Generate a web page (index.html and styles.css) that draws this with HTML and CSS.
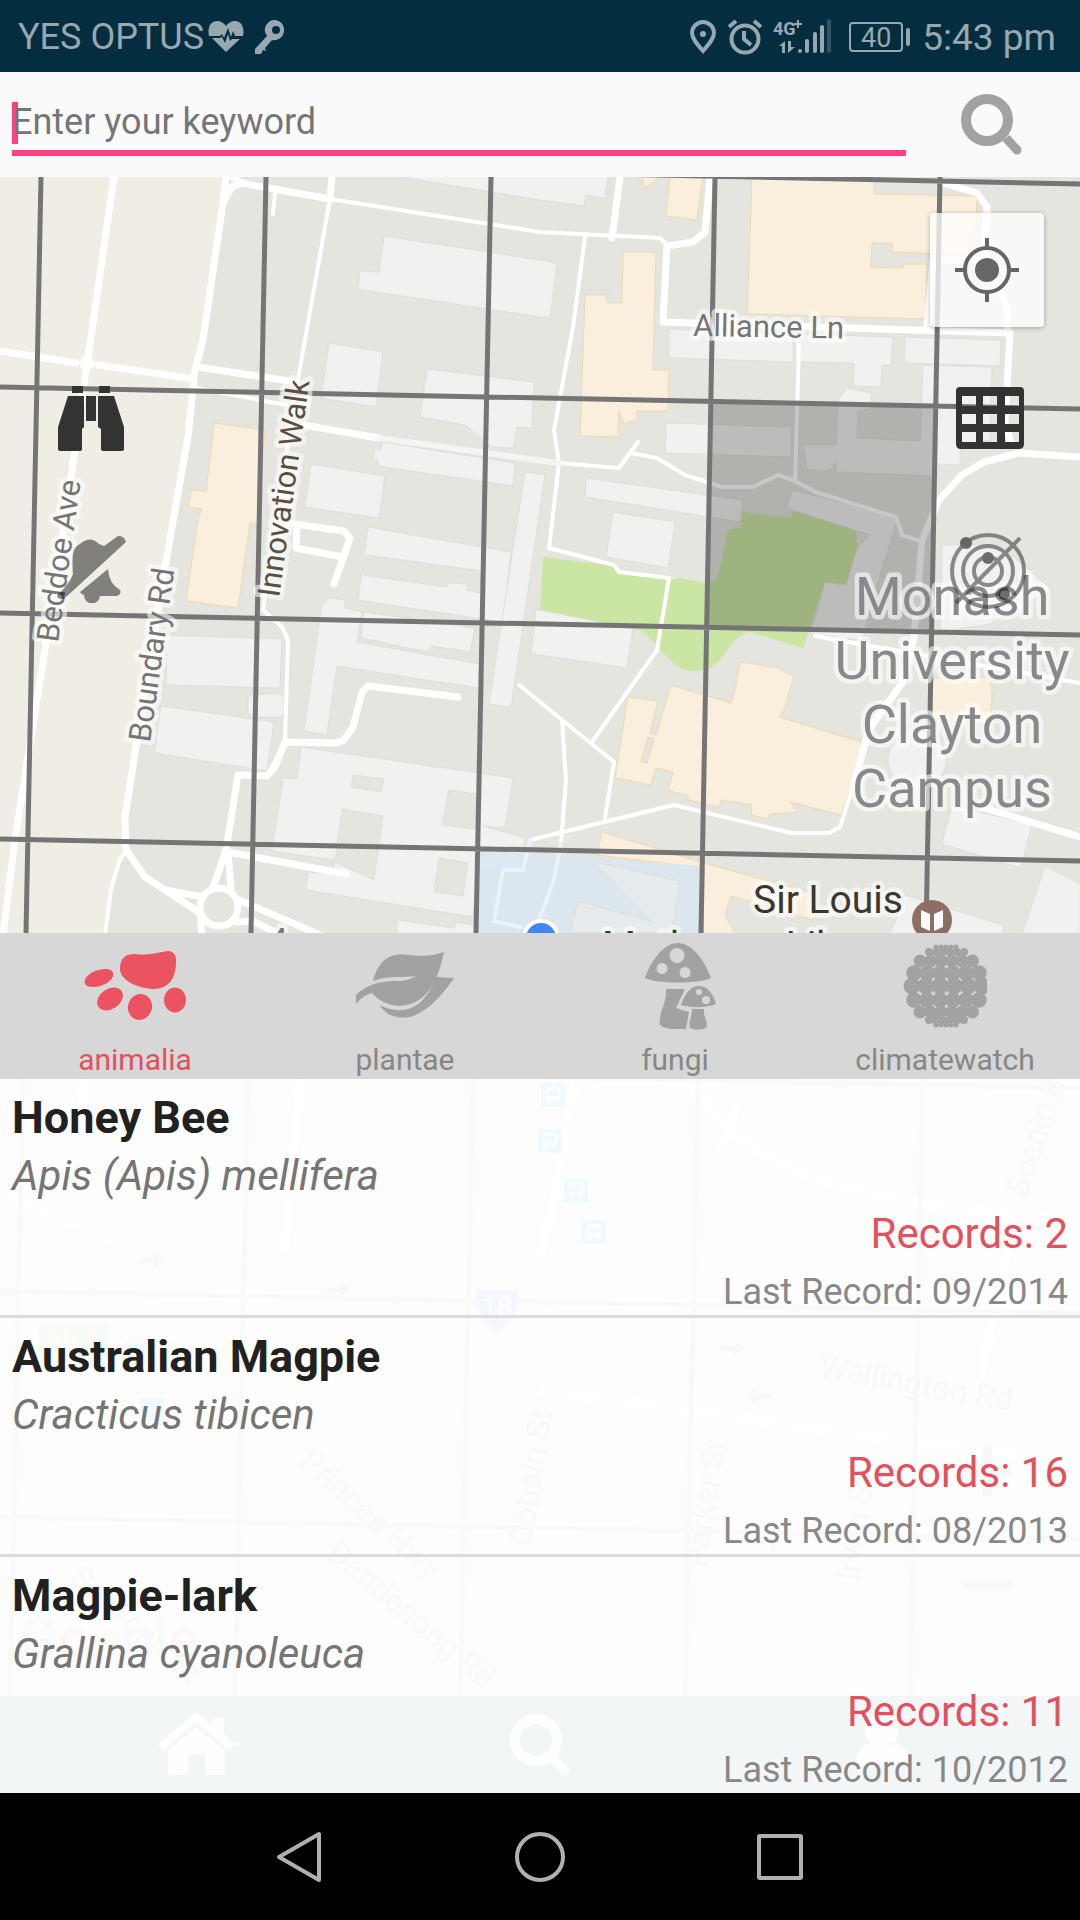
FILE: index.html
```html
<!DOCTYPE html>
<html lang="en">
<head>
<meta charset="utf-8">
<meta name="viewport" content="width=device-width, initial-scale=1">
<title>Nearby species</title>
<link rel="stylesheet" href="styles.css">
</head>
<body>
<div class="status">
  <span class="carrier">YES OPTUS</span>
  <svg class="status-heart" width="36" height="34" viewBox="0 0 36 34"><path fill="#98a8b0" d="M1 16C-1 7 3 1 9 1c4 0 7 2 9 5 2-3 5-5 9-5 6 0 10 6 8 15h-8l-2-5-2 6-3-9-4 10-2-4-2 2zM4 18h8l2-1 3 6 3-9 2 7 2-2h8L18 32z"/></svg>
  <svg width="33" height="36" viewBox="0 0 33 36"><path fill="#98a8b0" fill-rule="evenodd" d="M22 1a10 10 0 1 1-4 20L11 29l1 3-3-1-2 4H1v-5L13 17A10 10 0 0 1 22 1zm0 6a4 4 0 1 0 0 8 4 4 0 0 0 0-8z"/></svg>
  <div class="status-right">
    <svg width="28" height="36" viewBox="0 0 28 36"><path fill="none" stroke="#98a8b0" stroke-width="4" d="M14 32C7 24 3 19 3 14a11 11 0 0 1 22 0c0 5-4 10-11 18z"/><circle cx="14" cy="15" r="3" fill="#98a8b0"/></svg>
    <svg width="34" height="36" viewBox="0 0 34 36"><g fill="none" stroke="#98a8b0" stroke-width="4"><circle cx="17" cy="20" r="13.500"/><path d="M16 12v8l7 6M1 8l7-6M33 8l-7-6"/></g></svg>
    <svg width="60" height="36" viewBox="0 0 60 36"><text class="net" x="0" y="16">4G</text><path stroke="#98a8b0" stroke-width="2" fill="none" d="M21 5h8M25 1v8"/><path fill="#98a8b0" d="M12 22v12H9v-7H6zM15 22v12l7-6h-4v-6z"/><g stroke="#98a8b0" stroke-width="4" stroke-linecap="round"><path d="M27 32v0M34 32V22M42 32V15M49 32V8"/><path opacity=".3" d="M56 32V2"/></g></svg>
    <span class="battery">40</span>
    <span class="clock">5:43 pm</span>
  </div>
</div>

<form class="search">
  <input class="search-input" type="text" aria-label="Keyword" placeholder="Enter your keyword">
  <button class="search-button" type="button" aria-label="Search"><svg width="68" height="66" viewBox="0 0 68 66"><circle cx="28" cy="28" r="21" fill="none" stroke="#a3a2a0" stroke-width="10"/><path d="M47 46l11 12" stroke="#a3a2a0" stroke-width="9"/><circle cx="58" cy="58" r="4.500" fill="#a3a2a0"/></svg></button>
</form>

<section class="map" aria-label="Map">
  <svg class="map-canvas" viewBox="0 177 1080 756">
    <rect y="177" width="1080" height="756" fill="#e3e5de"/>
    <path fill="#f0ede4" d="M0 177H226L195 380 165 570 136 745 125 817 126 850 111 890 105 933H0z"/>
    <path fill="#cbe6a3" d="M543 557L614 566 619 572 668 580 680 578 705 583 716 580 722 560 727 530 740 528 743 512 790 518 793 511 856 530 858 548 846 585 825 582 803 648 750 632Q742 634 735 640C728 648 722 660 712 667 700 672 690 672 682 669 668 662 655 640 640 630L540 612z"/>
    <g class="gray">
      <path d="M384 236L540 260 557 263 550 318 540 317 358 289 360 271 379 272z"/>
      <path d="M395 176L540 200 584 206 586 195 605 198 608 176z"/>
      <path d="M329 343L383 352 376 407 321 398z"/>
      <path d="M427 369L534 382 532 428 517 427 513 448 492 447 465 425 420 417z"/>
      <path d="M382 442L515 463 513 486 378 466 378 460 373 459 375 449 381 450z"/>
      <path d="M311 464L385 476 379 518 305 507z"/>
      <path d="M368 527L511 552 503 622 475 618 358 600z"/>
      <path d="M525 472L545 475 511 707 489 704z"/>
      <path d="M322 604L330 598 345 600 345 608 362 612 357 642 480 664 478 688 337 666 327 735 304 731z"/>
      <path d="M364 612L475 628 470 652 431 646 429 652 413 649 361 638z"/>
      <path d="M167 635L282 639 280 688 166 685z"/>
      <path d="M161 706L274 722 267 771 154 753z"/>
      <path d="M252 694H281L284 698V713L281 717H252L248 713V698z"/>
      <path d="M301 747L513 778 505 828 483 826 525 838 520 870 478 868 473 917 306 890 308 872 334 874 334 860 272 851 283 778 297 779z"/>
      <path d="M397 920L454 928 456 922 480 926V940H397z"/>
      <path d="M669 329L793 333V362L669 358z"/>
      <path d="M795 334L893 337 891 365 882 365 881 387 853 386 854 363 795 362z"/>
      <path d="M905 337L1001 340 1000 366 904 363z"/>
      <path d="M923 365L992 367 990 440 960 445V465L938 464 938 476 836 472 836 462 830 471 807 470 803 445 836 445 838 400 847 388 871 393 871 409 858 411 857 438 920 441z"/>
      <path d="M666 423L791 427V457L665 453z"/>
      <path d="M586 478L743 500 740 522 585 497z"/>
      <path d="M613 512L675 522 668 568 606 557z"/>
      <path d="M793 490L898 517 880 575 862 640 810 634 825 582 846 585 857 548 870 535 786 508z"/>
      <path d="M540 610L633 629 627 668 540 655 531 653 536 610z"/>
      <path d="M952 805L1032 825 1021 868 942 844z"/>
      <path d="M1045 866L1080 884V940H1020z"/>
      <circle cx="917" cy="760" r="29"/>
      <path d="M905 895L1003 925V940H888z"/>
      <path d="M942 545L1000 545 1052 590 990 624 940 632z"/>
    </g>
    <g class="court">
      <path d="M366 555L482 571 480 593 467 590 467 584 447 583 447 587 363 575z"/>
      <path d="M342 809L383 816 374 880 335 862z"/>
      <path d="M353 775L384 779 381 792 351 787z"/>
      <path d="M449 790L476 794V829L442 825z"/>
      <path d="M439 858L468 863 463 896 434 892z"/>
    </g>
    <g class="tan">
      <path d="M214 423L265 430 258 523 250 523 238 608 186 601 198 519 202 509 188 507 191 490 206 491z"/>
      <path d="M752 176L874 176V194L977 196 975 255 892 252V243L872 243 871 267 903 268 904 264 927 264 925 319 747 314z"/>
      <path d="M670 176H703L697 220 666 216z"/><path d="M641 176H662L645 188z"/>
      <path d="M623 252L656 252 653 370 669 370 668 411 636 411 638 419 624 424 619 411 618 437 580 436 585 296 Q600 290 607 298L608 303 622 303z"/>
      <path fill-rule="evenodd" d="M671 685L731 703 735 690 738 672 741 662 760 665 778 668 794 677 787 700 784 710 779 717 865 743 860 765 841 815 790 802 798 812 770 814 768 819 751 815 752 805 721 800 719 807 688 800 688 795 668 791 673 772 656 768 651 785 615 778 628 697 658 701 650 733 656 735zM648 737L654 739 647 763 641 762z"/>
      <path d="M602 832L704 863 818 895 813 920 731 896 725 915 738 940H703L704 868 597 855z"/>
      <path d="M929 678L990 677 992 695 990 725 929 718z"/>
    </g>
    <path class="court" d="M586 290h24v5h-24z"/>
    <path fill="#dae6f2" fill-opacity=".85" d="M478 850L704 866 702 933H476z"/>
    <path class="court-blue" d="M595 862L680 881 672 933H570L578 901 654 922"/>
    <g class="roads">
      <path stroke-width="7" d="M114 177L88 358 84 385 62 540 46 643 15 839 3 935M226 177L223 203 203 340 195 370 188 437 165 567 136 747 125 817 126 850 145 877 165 890 200 913 202 935M165 890L203 897M0 351L76 363M98 365L168 375 193 379M198 367L296 382M303 425L379 438M223 203L232 187 241 183 330 199M241 183L231 176"/>
      <circle cx="219" cy="907" r="19" stroke-width="7"/><circle cx="87" cy="363" r="5" stroke-width="5"/>
      <path stroke-width="7" d="M213 888L226 850 238 775 267 776 275 767 285 742 337 743 344 740 353 727 362 692 368 686 458 697M231 888L228 852 346 874M239 900L325 937M236 922L252 921 285 937M332 177L330 199M287 523L344 531 350 538 334 584M297 526L296 548 343 557"/>
      <path stroke-width="4" d="M330 199L297 385 265 593 263 610 282 627 288 640 285 742 267 776M330 199L540 232 660 238 667 245M275 194L273 214M126 850L119 862 111 890 105 935M196 388L286 405M559 463L619 468 638 442M631 453L657 458 685 475 722 487 753 487 778 475 795 481 815 492 896 517 902 535 920 541M799 345L795 481M585 237L573 327 554 430 559 463 549 548 614 565 619 572 669 578 657 650 592 742M519 685L614 762 605 818M562 720L566 780 561 843M855 780L840 827 829 833 791 833 674 805 530 840M815 636L1080 683"/>
      <path stroke-width="7" d="M667 245L663 322 1010 333 1005 423 1012 445M667 246L693 242 705 232 710 177M620 177L612 238M943 183L977 193 987 207 984 260 1007 307 1008 333M984 260H933L927 328M1080 457L1019 453 984 462 962 475 939 500 922 540 914 637 902 683 869 730 855 780M981 807L1080 837"/>
      <path stroke="#f4f4f4" stroke-width="6" d="M379 438L559 463"/>
      <path stroke="#eaf2fb" stroke-width="4" d="M561 843L554 880 540 917M530 840L523 870 503 870 494 921 520 927"/>
    </g>
    <path fill-opacity=".22" d="M711 402L936 406 932 632 707 628z"/>
    <path class="grid" d="M41 177L26 933M266 177L251 933M491 177L476 933M715 177L701 933M940 177L926 933M0 161L1080 184M0 387L1080 409M0 613L1080 635M0 839L1080 861"/>
    <g class="place">
      <text x="693" y="336" transform="rotate(1 693 336)">Alliance Ln</text>
      <text x="58" y="643" transform="rotate(-82 58 643)">Beddoe Ave</text>
      <text x="150" y="743" transform="rotate(-82 150 743)">Boundary Rd</text>
      <text class="walk" x="279" y="598" transform="rotate(-82 279 598)">Innovation Walk</text>
      <text x="270" y="950">4</text>
    </g>
    <g class="campus"><text x="952" y="615">Monash</text><text x="952" y="679">University</text><text x="952" y="743">Clayton</text><text x="952" y="807">Campus</text></g>
    <g class="poi"><text x="753" y="913">Sir Louis</text><text x="602" y="959">Matheson Library</text></g>
    <circle cx="541" cy="938" r="17" fill="#4285f4" stroke="#fff" stroke-width="4"/>
    <circle cx="932" cy="920" r="20" fill="#8d6e63"/><path fill="#fff" d="M921 910l9 4v17l-9-4zM943 910l-9 4v17l9-4z"/>
  </svg>
  <div class="tools tools-left">
    <button type="button" class="tool" aria-label="Explore"><svg width="68" height="68" viewBox="0 0 68 68"><path fill="#333" d="M15 1h11v7H15zM42 1h11v7H42zM11 11h16v31l-2 2v20q0 2-2 2H3q-2 0-2-2V42zM29 11h10v25H29zM41 11h16l10 31v22q0 2-2 2H46q-2 0-2-2V44l-3-2z"/></svg></button>
    <button type="button" class="tool" aria-label="Turn alerts on"><svg width="74" height="68" viewBox="0 0 74 68"><g fill="#000" fill-opacity=".46"><path d="M19 39C18 20 18 13 26 9q10-9 19 0l5 2L64 1q6-1 8 6L11 63q-7 3-8-3 12-10 16-21z"/><path d="M54 34q1 15 12 21 2 4-3 6H46a8 8 0 0 1-16-1q-3-1-4-3z"/></g></svg></button>
  </div>
  <div class="tools tools-right">
    <button type="button" class="tool locate" aria-label="My location"><svg width="68" height="68" viewBox="0 0 68 68"><g fill="none" stroke="#666" stroke-width="4"><circle cx="34" cy="34" r="22"/><path d="M34 2v10M34 56v10M2 34h10M56 34h10"/></g><circle cx="34" cy="34" r="12" fill="#666"/></svg></button>
    <button type="button" class="tool" aria-label="Toggle grid"><svg width="74" height="64" viewBox="-5 0 74 64"><path fill="#333" fill-rule="evenodd" d="M5 1h60q4 0 4 4v53q0 5-5 5H6q-5 0-5-5V5q0-4 4-4zM7 10v10h14V10zm21 0v10h14V10zm22 0v10h14V10zM7 28v10h14V28zm21 0v10h14V28zm22 0v10h14V28zM7 46v10h14V46zm21 0v10h14V46zm22 0v10h14V46z"/></svg></button>
    <button type="button" class="tool radar" aria-label="Turn radar on"><svg width="78" height="80" viewBox="0 0 78 80"><g opacity=".55"><g fill="none" stroke="#333" stroke-width="4"><circle cx="40" cy="40" r="36"/><circle cx="40" cy="40" r="25"/><circle cx="40" cy="40" r="14"/><path d="M8 72L72 7"/></g><circle cx="18" cy="12" r="6"/><circle cx="40" cy="27" r="6"/><circle cx="56" cy="63" r="6"/></g></svg></button>
  </div>
</section>

<nav class="kinds" aria-label="Groups">
  <button type="button" class="kind kind-on"><svg class="kind-icon" width="104" height="90" viewBox="0 0 104 90"><g fill="#ea535f"><path d="M37 26C37 14 44 11 51 11c15 2 25-2 34-3 6 0 9 5 8 13-1 16-8 24-21 25-17 0-35-9-35-20z"/><ellipse cx="16" cy="35" rx="15" ry="8" transform="rotate(-20 16 35)"/><ellipse cx="27" cy="56" rx="14" ry="10" transform="rotate(-34 27 56)"/><ellipse cx="57" cy="64" rx="12" ry="13" transform="rotate(20 57 64)"/><ellipse cx="92" cy="57" rx="11" ry="12.500"/></g></svg><span>animalia</span></button>
  <button type="button" class="kind"><svg class="kind-icon" width="100" height="90" viewBox="0 0 100 90"><g fill="#a3a2a0"><path d="M18 38C24 15 37 10 53 12c18 2 26 0 36-3C84 31 76 61 45 63 32 62 24 58 17 50 10 52 6 55 1 61v-9C15 38 34 38 43 38q10 0 18-5-7 1-18 1-15 0-25 4z"/><path d="M24 62c19 9 43 10 57-28l18 1C82 60 68 70 55 74c-13 2-23-1-31-12z"/></g></svg><span>plantae</span></button>
  <button type="button" class="kind"><svg class="kind-icon" width="82" height="90" viewBox="-10 0 82 90"><path fill="#a3a2a0" fill-rule="evenodd" d="M1 35C9 13 22 0 34 0s25 13 33 35c-11 6-55 6-66 0zM33 5a7 7 0 1 0 0 15 7 7 0 0 0 0-15zM18 20a5 5 0 1 0 0 11 5 5 0 0 0 0-11zM41 24a5 5 0 1 0 0 11 5 5 0 0 0 0-11zM22 46h19L32 65l13 4-3 17c-10 0-20 1-26-4-2-12 7-22 6-36zM37 62c4-12 10-19 18-19s14 7 17 18c-10 4-25 4-35 1zM55 46a3 3 0 1 0 0 6 3 3 0 0 0 0-6zM62 53a4 4 0 1 0 0 8 4 4 0 0 0 0-8zM48 66h12c-1 9 5 13 2 19-4 2-12 2-16 0-2-6 2-10 2-19z"/></svg><span>fungi</span></button>
  <button type="button" class="kind"><svg class="kind-icon" width="84" height="90" viewBox="0 0 84 90"><g fill="none" stroke="#a3a2a0" stroke-linecap="round"><path stroke-width="5" stroke-dasharray="0 5" d="M33 4h21M33 82h21"/><path stroke-width="8" stroke-dasharray="0 7" d="M26 9h36M26 77h36"/><path stroke-width="13" stroke-dasharray="0 10.500" d="M17 18h53M17 69h53"/><path stroke-width="15.500" stroke-dasharray="0 13" d="M11 30h66M11 57h66"/><path stroke-width="17" stroke-dasharray="0 14" d="M9 43h71"/></g></svg><span>climatewatch</span></button>
</nav>

<main class="results">
  <svg class="backdrop" viewBox="0 1079 1080 715" aria-hidden="true">
    <rect y="1079" width="1080" height="715" fill="#fdfdfd"/>
    <g fill="none" stroke="#fff" stroke-width="9"><path d="M692 1082C740 1155 790 1170 860 1190S1000 1210 1080 1225M575 1080L560 1170 540 1260M740 1100L720 1150M0 1190L60 1220 240 1310M85 1080L80 1110M300 1080L285 1250M540 1390L900 1440 1080 1460M1010 1240L980 1380"/></g>
    <path fill="#fefdfb" d="M0 1195L100 1240 540 1308 1080 1390V1460L540 1380 300 1350 180 1400 610 1696H500L0 1330z"/>
    <path class="backdrop-grid" d="M23 1079L10 1696M248 1079L235 1696M473 1079L460 1696M698 1079L685 1696M923 1079L910 1696M540 1077L1080 1088M0 1291L1080 1313M0 1517L1080 1539"/>
    <g class="backdrop-text">
      <text x="1026" y="1198" transform="rotate(-71 1026 1198)">Scenic Blvd</text>
      <text class="warm" x="818" y="1377" transform="rotate(10 818 1377)">Wellington Rd</text>
      <text x="298" y="1464" transform="rotate(42 298 1464)">Princes Hwy</text>
      <text class="warm" x="325" y="1556" transform="rotate(40 325 1556)">Dandenong Rd</text>
      <text x="531" y="1547" transform="rotate(-81 531 1547)">Cobain St</text>
      <text x="706" y="1569" transform="rotate(-81 706 1569)">Parker St</text>
      <text x="858" y="1582" transform="rotate(-81 858 1582)">Irwin St</text>
      <text x="68" y="1580" transform="rotate(41 68 1580)">Souvenir St</text>
    </g>
    <g fill="#effaff"><path id="bus" fill-rule="evenodd" d="M541 1083h24v24h-24zm5 5v11l2 3h2v-2h6v2h2l2-3v-11q-7-4-14 0zm2 2h10v6h-10z"/><use href="#bus" x="-3" y="46"/><use href="#bus" x="23" y="96"/><use href="#bus" x="41" y="137"/><rect x="123" y="1343" width="22" height="22"/><rect x="140" y="1398" width="24" height="24"/></g>
    <path fill="#f4f8fe" d="M476 1290h42q4 28-21 42-25-14-21-42z"/><text class="shield" x="497" y="1317">18</text>
    <rect x="38" y="1324" width="70" height="36" rx="4" fill="#f8fcf6"/><text class="alt" x="73" y="1351">Alt 1</text>
    <g fill="#f8f8f8"><path d="M982 1446h10v50h-10zM962 1466h50v10h-50zM962 1580h50v10h-50zM140 1258h14v-5l12 7-12 7v-4h-14zM326 1287h14v-5l12 7-12 7v-4h-14zM720 1346h14v-5l12 7-12 7v-4h-14zM770 1394h-14v-5l-12 7 12 7v-4h14z"/></g>
    <text class="google" x="20" y="1658"><tspan fill="#f6f9fe">G</tspan><tspan fill="#fef6f5">o</tspan><tspan fill="#fffcf5">o</tspan><tspan fill="#f6f9fe">g</tspan><tspan fill="#f6fbf7">l</tspan><tspan fill="#fef6f5">e</tspan></text>
    <rect y="1696" width="1080" height="98" fill="#f3f6f7"/>
    <g fill="#fefefe"><path d="M158 1744L192 1715Q196 1712 200 1715L212 1725V1718H224V1734L235 1744 229 1750 196 1722 164 1750z"/><path d="M168 1750L196 1727 225 1750V1772Q225 1775 222 1775H205V1754H188V1775H172Q168 1775 168 1772z"/><circle cx="882" cy="1731" r="17"/><path d="M855 1766Q857 1744 870 1744 883 1752 895 1744 909 1745 910 1766z"/></g>
    <circle cx="536" cy="1740" r="21" fill="none" stroke="#fefefe" stroke-width="10"/><path d="M553 1758l12 13" stroke="#fefefe" stroke-width="9" stroke-linecap="round"/>
  </svg>
  <article class="species"><h2>Honey Bee</h2><p class="latin">Apis (Apis) mellifera</p><p class="count">Records: 2</p><p class="last">Last Record: 09/2014</p></article>
  <article class="species"><h2>Australian Magpie</h2><p class="latin">Cracticus tibicen</p><p class="count">Records: 16</p><p class="last">Last Record: 08/2013</p></article>
  <article class="species"><h2>Magpie-lark</h2><p class="latin">Grallina cyanoleuca</p><p class="count">Records: 11</p><p class="last">Last Record: 10/2012</p></article>
</main>

<nav class="system" aria-label="System">
  <button type="button" aria-label="Back"><svg width="52" height="54" viewBox="0 0 52 54"><path fill="none" stroke="#b0b0b0" stroke-width="4" stroke-linejoin="round" d="M45 4v46L5 27z"/></svg></button>
  <button type="button" aria-label="Home"><svg width="54" height="54" viewBox="0 0 54 54"><circle cx="27" cy="27" r="23" fill="none" stroke="#b0b0b0" stroke-width="4"/></svg></button>
  <button type="button" aria-label="Recent apps"><svg width="54" height="54" viewBox="0 0 54 54"><rect x="6" y="6" width="42" height="42" rx="1" fill="none" stroke="#b0b0b0" stroke-width="4"/></svg></button>
</nav>
</body>
</html>
```

FILE: styles.css
```css
* { box-sizing: border-box; }
body {
  margin: 0;
  min-height: 100vh;
  display: flex;
  flex-direction: column;
  background: #fafafa;
  font-family: Roboto, "Noto Sans", sans-serif;
}
svg { display: block; flex: none; }
button { border: 0; padding: 0; background: none; font: inherit; color: inherit; }
h2, p { margin: 0; }

.status {
  height: 72px;
  padding: 2px 24px 0 18px;
  display: flex;
  align-items: center;
  gap: 10px;
  background: #042e40;
  color: #98a8b0;
  font-size: 36px;
}
.status-heart { margin-left: -6px; }
.status-right { margin-left: auto; display: flex; align-items: center; gap: 11px; }
.clock { font-size: 37px; }
.net { font-size: 18px; font-weight: 700; fill: #98a8b0; }
.battery {
  position: relative;
  width: 54px;
  height: 30px;
  margin: 0 8px 0 5px;
  border: 2px solid #98a8b0;
  border-radius: 4px;
  font-size: 27px;
  line-height: 28px;
  text-align: center;
}
.battery::after {
  content: "";
  position: absolute;
  top: 4px;
  right: -9px;
  width: 4px;
  height: 18px;
  border-radius: 2px;
  background: #98a8b0;
}

.search {
  height: 105px;
  display: flex;
  align-items: center;
  padding: 0 0 0 12px;
  background: #fafafa;
}
.search-input {
  flex: 1;
  min-width: 0;
  height: 62px;
  padding: 0;
  border: 0;
  border-bottom: 6px solid #ff4081;
  border-radius: 0;
  outline: 0;
  background: linear-gradient(#ff4081, #ff4081) 0 8px / 6px 42px no-repeat;
  font: 36px Roboto, "Noto Sans", sans-serif;
}
.search-input::placeholder { color: #757575; opacity: 1; }
.search-button { width: 174px; display: flex; justify-content: center; }

.map { position: relative; }
.map-canvas { width: 100%; height: auto; overflow: hidden; }
.gray { fill: #f1f1f0; stroke: #dededa; stroke-width: 1; }
.court { fill: #e3e5de; stroke: #dededa; stroke-width: 1; }
.court-blue { fill: #e6ebee; stroke: #dfdfd5; stroke-width: 1; }
.tan { fill: #f9efdc; stroke: #efd8ae; stroke-width: 1; }
.roads { fill: none; stroke: #fff; stroke-linecap: round; stroke-linejoin: round; }
.grid { fill: none; stroke: #757575; stroke-width: 5; }
.place text, .campus text, .poi text {
  paint-order: stroke;
  stroke: rgba(255, 255, 255, .6);
  stroke-width: 9px;
  stroke-linejoin: round;
}
.place { font-size: 31px; fill: #757575; }
.place .walk { fill: #5b4f3f; }
.campus { font-size: 54px; text-anchor: middle; fill: #88898b; }
.poi { font-size: 39px; fill: #3b3632; }
.tools { position: absolute; display: flex; flex-direction: column; align-items: center; }
.tools-left { top: 208px; left: 54px; gap: 82px; }
.tools-right { top: 36px; right: 36px; gap: 59px; }
.locate {
  width: 114px;
  height: 114px;
  display: grid;
  place-items: center;
  border-radius: 4px;
  background: rgba(255, 255, 255, .75);
  box-shadow: 0 1px 5px rgba(0, 0, 0, .3);
}
.radar { margin-top: 22px; }

.kinds {
  display: grid;
  grid-template-columns: repeat(4, 1fr);
  height: 146px;
  background: #d7d7d7;
  color: #888785;
}
.kind {
  display: flex;
  flex-direction: column;
  align-items: center;
  padding-top: 10px;
  gap: 9px;
  font-size: 30px;
  line-height: 36px;
}
.kind-on { color: #e0525d; }

.results { position: relative; overflow: hidden; background: #fdfdfd; }
.backdrop { position: absolute; top: 0; left: 0; width: 100%; }
.backdrop-grid { fill: none; stroke: #f9f9f9; stroke-width: 5; }
.backdrop-text { font-size: 32px; fill: #f8f8f8; }
.backdrop-text .warm { fill: #faf7f5; }
.shield { font-size: 28px; text-anchor: middle; fill: #fff; }
.alt { font-size: 28px; text-anchor: middle; fill: #fefdf5; }
.google { font-size: 56px; font-weight: 500; }
.species { position: relative; padding: 10px 12px 0; }
.species + .species { border-top: 3px solid #dcdcdc; }
.species h2 { font-size: 45px; line-height: 58px; color: #212121; }
.latin { font-size: 42px; line-height: 58px; font-style: italic; color: #757575; }
.count { font-size: 42px; line-height: 58px; text-align: right; color: #e0525d; }
.last { margin-top: 6px; font-size: 36px; line-height: 46px; text-align: right; color: #888; }

.system {
  flex: 1;
  min-height: 126px;
  padding: 0 16.66%;
  display: grid;
  grid-template-columns: repeat(3, 1fr);
  place-items: center;
  background: #000;
}
```
